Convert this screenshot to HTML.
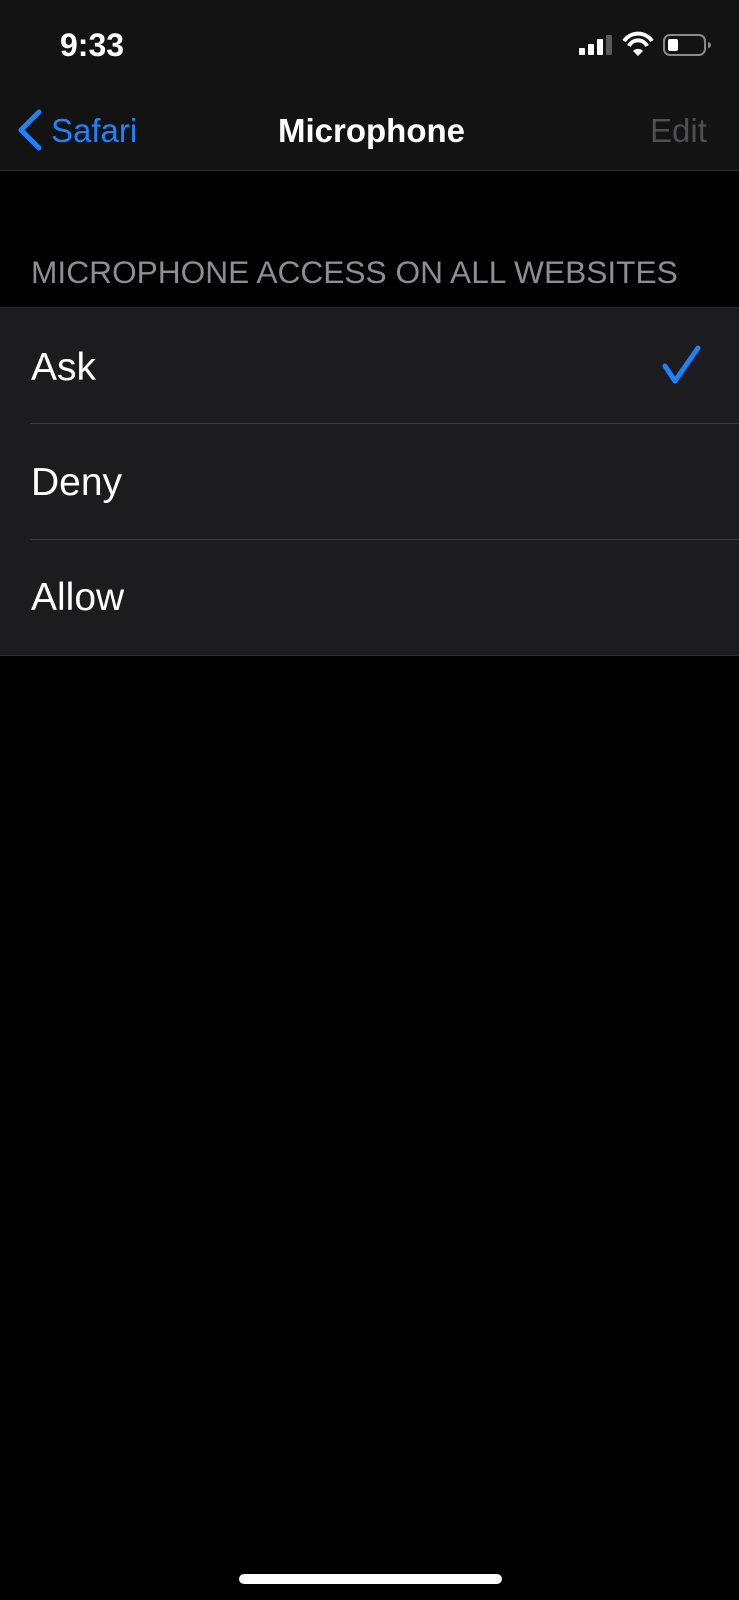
<!DOCTYPE html>
<html><head><meta charset="utf-8"><style>
*{margin:0;padding:0;box-sizing:border-box}
body{width:739px;height:1600px;background:#000;font-family:"Liberation Sans",sans-serif;position:relative;overflow:hidden}
.top{position:absolute;left:0;top:0;width:739px;height:171px;background:#131313;border-bottom:1px solid #2a2a2a}
.abs{position:absolute;white-space:nowrap}
.list{position:absolute;left:0;top:307px;width:739px;height:349px;background:#1c1c1e;border-top:1px solid #2c2c2e;border-bottom:1px solid #2c2c2e}
.row{position:absolute;left:31px;font-size:39px;color:#fff}
.sep{position:absolute;left:30px;right:0;height:1px;background:#38383a}
</style></head><body>
<div class="top"></div>
<div class="abs" style="left:60px;top:27px;font-size:32px;font-weight:bold;color:#fff">9:33</div>
<svg class="abs" style="left:575px;top:30px" width="140" height="30" viewBox="0 0 140 30">
<rect x="4" y="18" width="6" height="7" rx="1" fill="#fff"/>
<rect x="13" y="14" width="6" height="11" rx="1" fill="#fff"/>
<rect x="22" y="9" width="6" height="16" rx="1" fill="#fff"/>
<rect x="31" y="5" width="6" height="20" rx="1" fill="#5a5a5a"/>
<path d="M49 11 A17 17 0 0 1 77 11" stroke="#fff" stroke-width="4" fill="none"/>
<path d="M54 16 A10 10 0 0 1 72 16" stroke="#fff" stroke-width="4" fill="none"/>
<path d="M58 21 L63 26 L68 21 A7 7 0 0 0 58 21Z" fill="#fff"/>
<rect x="89" y="5" width="41" height="20" rx="6" stroke="#8a8a8a" stroke-width="2" fill="none"/>
<rect x="93" y="9" width="10" height="12" rx="2" fill="#fff"/>
<path d="M133 12 v6 a3 3 0 0 0 0-6z" fill="#8a8a8a"/>
</svg>
<svg class="abs" style="left:14px;top:108px" width="32" height="46" viewBox="0 0 32 46"><path d="M25 4 L7 22 L25 40" stroke="#1a84ff" stroke-width="5" stroke-linecap="round" stroke-linejoin="round" fill="none"/></svg>
<div class="abs" style="left:51px;top:112px;font-size:33px;color:#1a84ff">Safari</div>
<div class="abs" style="left:278px;top:112px;font-size:33px;font-weight:bold;color:#fff">Microphone</div>
<div class="abs" style="left:650px;top:112px;font-size:33px;color:#4f4f52">Edit</div>
<div class="abs" style="left:31px;top:254px;font-size:31.7px;color:#8d8d92">MICROPHONE ACCESS ON ALL WEBSITES</div>
<div class="list">
<div class="row" style="top:38px">Ask</div>
<svg class="abs" style="left:660px;top:36px" width="44" height="44" viewBox="0 0 44 44"><path d="M5 22 L15 37 L38 4" stroke="#1a84ff" stroke-width="5" stroke-linecap="round" stroke-linejoin="round" fill="none"/></svg>
<div class="sep" style="top:115px"></div>
<div class="row" style="top:153px">Deny</div>
<div class="sep" style="top:231px"></div>
<div class="row" style="top:268px">Allow</div>
</div>
<div class="abs" style="left:239px;top:1574px;width:263px;height:10px;border-radius:5px;background:#fff"></div>
</body></html>
